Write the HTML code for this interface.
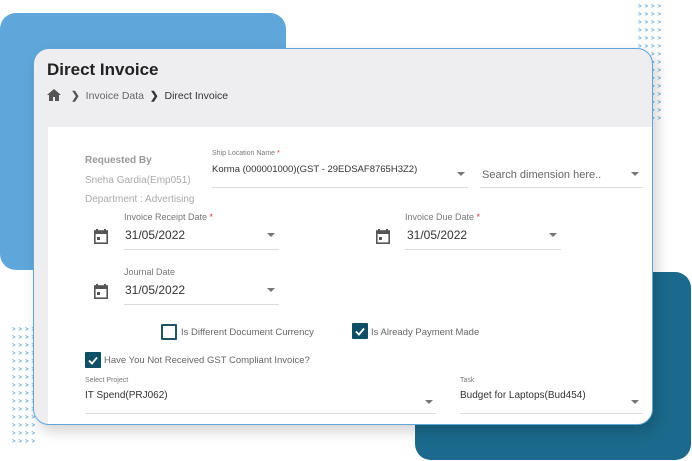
<!DOCTYPE html>
<html><head><meta charset="utf-8"><style>
*{margin:0;padding:0;box-sizing:border-box}
body{width:692px;height:461px;overflow:hidden;background:#fff;font-family:"Liberation Sans",Arial,sans-serif;position:relative}
.a{position:absolute;white-space:nowrap}
.dots{position:absolute;color:#5fa7db;font-size:6px;line-height:8px;letter-spacing:3px;font-weight:bold}
.lbl{font-size:8px;color:#777}
.val{font-size:12px;color:#333}
.ul{position:absolute;height:1px;background:#dcdcdc}
.arr{position:absolute;width:0;height:0;border-left:4px solid transparent;border-right:4px solid transparent;border-top:4px solid #777}
.cal{position:absolute;width:14px;height:15px}
.cb{position:absolute;width:16px;height:16px;border:2px solid #1d5468;border-radius:1px}
.cbf{position:absolute;width:16px;height:16px;background:#0d4f66;border-radius:1px}
.t11{font-size:11px;color:#666}
</style></head><body>
<div style="position:absolute;left:0;top:13px;width:286px;height:257px;background:#5fa7db;border-radius:16px"></div>
<div style="position:absolute;left:415px;top:272px;width:276px;height:188px;background:#1b6a8d;border-radius:16px"></div>
<div class="dots" style="left:638px;top:3px">&gt;&gt;&gt;&gt;<br>&gt;&gt;&gt;&gt;<br>&gt;&gt;&gt;&gt;<br>&gt;&gt;&gt;&gt;<br>&gt;&gt;&gt;&gt;<br>&gt;&gt;&gt;&gt;<br>&gt;&gt;&gt;&gt;<br>&gt;&gt;&gt;&gt;<br>&gt;&gt;&gt;&gt;<br>&gt;&gt;&gt;&gt;<br>&gt;&gt;&gt;&gt;<br>&gt;&gt;&gt;&gt;<br>&gt;&gt;&gt;&gt;<br>&gt;&gt;&gt;&gt;<br>&gt;&gt;&gt;&gt;</div>
<div class="dots" style="left:12px;top:326px">&gt;&gt;&gt;&gt;<br>&gt;&gt;&gt;&gt;<br>&gt;&gt;&gt;&gt;<br>&gt;&gt;&gt;&gt;<br>&gt;&gt;&gt;&gt;<br>&gt;&gt;&gt;&gt;<br>&gt;&gt;&gt;&gt;<br>&gt;&gt;&gt;&gt;<br>&gt;&gt;&gt;&gt;<br>&gt;&gt;&gt;&gt;<br>&gt;&gt;&gt;&gt;<br>&gt;&gt;&gt;&gt;<br>&gt;&gt;&gt;&gt;<br>&gt;&gt;&gt;&gt;<br>&gt;&gt;&gt;&gt;</div>
<div style="position:absolute;left:33px;top:48px;width:620px;height:377px;background:#eeeef0;border:1px solid #5fa7db;border-radius:16px;overflow:hidden;box-shadow:4px 6px 14px rgba(0,0,0,.18)">
<div style="position:absolute;left:14px;top:78px;right:0;bottom:0;background:#fff"></div>
</div>
<div class="a" style="left:47px;top:60px;font-size:17px;font-weight:bold;color:#222">Direct Invoice</div>
<svg class="a" style="left:47px;top:89px" width="14" height="12" viewBox="0 0 14 12"><path d="M7 0L0 6h2v6h4V8h2v4h4V6h2z" fill="#555"/></svg>
<div class="a" style="left:71px;top:90px;font-size:10.5px;color:#666"><b style="color:#555">&#x276F;</b>&nbsp;&nbsp;Invoice Data &nbsp;<b style="color:#333">&#x276F;</b>&nbsp; <span style="color:#333">Direct Invoice</span></div>
<div class="a" style="left:85px;top:155px;font-size:10px;font-weight:bold;color:#999">Requested By</div>
<div class="a" style="left:85px;top:175px;font-size:10px;color:#aaa">Sneha Gardia(Emp051)</div>
<div class="a" style="left:85px;top:194px;font-size:10px;color:#aaa">Department : Advertising</div>
<div class="a lbl" style="left:212px;top:150px;font-size:7px">Ship Location Name <span style="color:#e33">*</span></div>
<div class="a" style="left:212px;top:164px;font-size:9.5px;color:#333">Korma (000001000)(GST - 29EDSAF8765H3Z2)</div>
<div class="ul" style="left:212px;top:187px;width:256px"></div>
<div class="arr" style="left:457px;top:172px"></div>
<div class="a" style="left:482px;top:169px;font-size:11px;color:#666">Search dimension here..</div>
<div class="ul" style="left:480px;top:187px;width:163px"></div>
<div class="arr" style="left:631px;top:172px"></div>

<div class="a lbl" style="left:124px;top:212px;font-size:9px">Invoice Receipt Date <span style="color:#e33">*</span></div>
<div class="a val" style="left:125px;top:228px">31/05/2022</div>
<div class="ul" style="left:124px;top:249px;width:155px"></div>
<div class="arr" style="left:267px;top:233px"></div>
<div class="a lbl" style="left:405px;top:212px;font-size:9px">Invoice Due Date <span style="color:#e33">*</span></div>
<div class="a val" style="left:407px;top:228px">31/05/2022</div>
<div class="ul" style="left:405px;top:249px;width:156px"></div>
<div class="arr" style="left:549px;top:233px"></div>
<div class="a lbl" style="left:124px;top:267px;font-size:9px">Journal Date</div>
<div class="a val" style="left:125px;top:283px">31/05/2022</div>
<div class="ul" style="left:124px;top:304px;width:155px"></div>
<div class="arr" style="left:267px;top:288px"></div>
<svg class="cal" style="left:94px;top:229px" viewBox="0 0 14 15"><path d="M3 0v2M11 0v2" stroke="#555" stroke-width="2"/><rect x="0.8" y="2" width="12.4" height="12.2" fill="none" stroke="#555" stroke-width="1.6"/><rect x="0.8" y="2" width="12.4" height="3" fill="#555"/><rect x="3" y="8" width="3" height="3" fill="#555"/></svg>
<svg class="cal" style="left:376px;top:229px" viewBox="0 0 14 15"><path d="M3 0v2M11 0v2" stroke="#555" stroke-width="2"/><rect x="0.8" y="2" width="12.4" height="12.2" fill="none" stroke="#555" stroke-width="1.6"/><rect x="0.8" y="2" width="12.4" height="3" fill="#555"/><rect x="3" y="8" width="3" height="3" fill="#555"/></svg>
<svg class="cal" style="left:94px;top:284px" viewBox="0 0 14 15"><path d="M3 0v2M11 0v2" stroke="#555" stroke-width="2"/><rect x="0.8" y="2" width="12.4" height="12.2" fill="none" stroke="#555" stroke-width="1.6"/><rect x="0.8" y="2" width="12.4" height="3" fill="#555"/><rect x="3" y="8" width="3" height="3" fill="#555"/></svg>

<div class="cb" style="left:161px;top:324px"></div>
<div class="a t11" style="left:181px;top:327px;font-size:9.5px">Is Different Document Currency</div>
<div class="cbf" style="left:352px;top:323px"><svg width="16" height="16"><path d="M4 8.5l3 3 5-6" stroke="#fff" stroke-width="1.8" fill="none"/></svg></div>
<div class="a t11" style="left:371px;top:327px;font-size:9.5px">Is Already Payment Made</div>
<div class="cbf" style="left:85px;top:352px"><svg width="16" height="16"><path d="M4 8.5l3 3 5-6" stroke="#fff" stroke-width="1.8" fill="none"/></svg></div>
<div class="a t11" style="left:104px;top:355px;font-size:9.5px">Have You Not Received GST Compliant Invoice?</div>

<div class="a lbl" style="left:85px;top:377px;font-size:7px">Select Project</div>
<div class="a" style="left:85px;top:390px;font-size:10px;color:#333">IT Spend(PRJ062)</div>
<div class="ul" style="left:85px;top:413px;width:351px"></div>
<div class="arr" style="left:425px;top:400px"></div>
<div class="a lbl" style="left:460px;top:377px;font-size:7px">Task</div>
<div class="a" style="left:460px;top:390px;font-size:10px;color:#333">Budget for Laptops(Bud454)</div>
<div class="ul" style="left:460px;top:413px;width:183px"></div>
<div class="arr" style="left:631px;top:400px"></div>
</body></html>
